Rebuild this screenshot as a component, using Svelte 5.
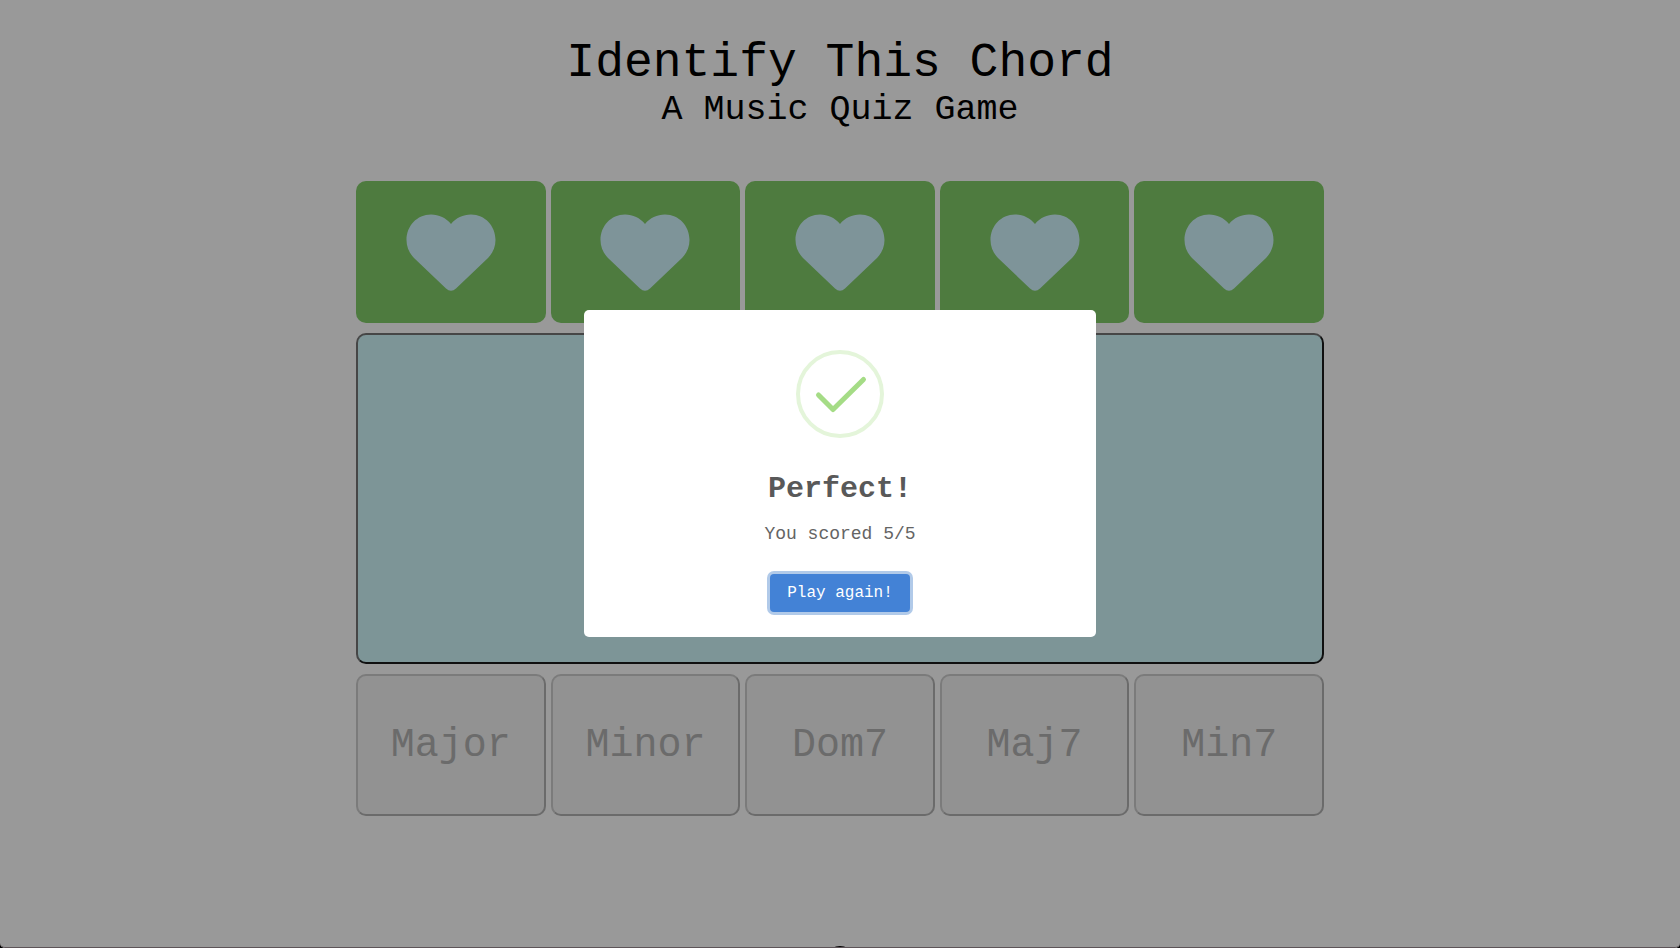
<script>
  const rounds = [1, 2, 3, 4, 5];
  const chords = ['Major', 'Minor', 'Dom7', 'Maj7', 'Min7'];
</script>

<div class="page">
  <header>
    <h1>Identify This Chord</h1>
    <h2>A Music Quiz Game</h2>
  </header>

  <main>
    <div class="row">
      {#each rounds as round (round)}
        <div class="life">
          <svg viewBox="0 0 90 78" aria-hidden="true">
            <path d="M45 10C50 4 57 .5 65 .5C79 .5 89.500 12 89.500 26C89.500 33 86.500 39.500 82 44L50 74.500Q45 79 40 74.500L8 44C3.500 39.500 .5 33 .5 26C.5 12 11 .5 25 .5C33 .5 40 4 45 10Z" />
          </svg>
        </div>
      {/each}
    </div>

    <button class="stage" type="button" aria-label="Play chord"></button>

    <div class="row">
      {#each chords as chord (chord)}
        <button class="answer" type="button" disabled>{chord}</button>
      {/each}
    </div>
  </main>

  <footer><span class="disc"></span></footer>
</div>

<div class="overlay">
  <div class="modal" role="dialog" aria-modal="true" aria-labelledby="result">
    <svg class="check" viewBox="0 0 88 88" aria-hidden="true">
      <circle cx="44" cy="44" r="42" />
      <path d="M22.500 45L37 59.500L67.500 29.500" />
    </svg>
    <h3 id="result">Perfect!</h3>
    <p>You scored 5/5</p>
    <button class="again" type="button">Play again!</button>
  </div>
</div>

<style>
  :global(body) {
    margin: 0;
    background: #000;
    overflow: hidden;
    font-family: "Courier New", "Liberation Mono", monospace;
  }

  .page {
    height: 100vh;
    overflow: hidden;
    display: flex;
    flex-direction: column;
    align-items: center;
    box-sizing: border-box;
    padding-top: 35px;
    border-radius: 0 0 5px 5px;
    background: #fff;
    color: #000;
  }

  header {
    text-align: center;
    margin-bottom: 52px;
  }

  h1,
  h2 {
    margin: 0;
    font-weight: 400;
  }

  h1 {
    font-size: 48px;
    line-height: 56px;
  }

  h2 {
    font-size: 35px;
    line-height: 38px;
  }

  main {
    width: 100%;
    max-width: 968px;
    display: grid;
    gap: 10px;
  }

  .row {
    display: grid;
    grid-template-columns: repeat(5, 1fr);
    gap: 5px;
  }

  button {
    font-family: inherit;
    box-sizing: border-box;
  }

  .life,
  .answer {
    height: 142px;
    border-radius: 10px;
  }

  .life {
    box-sizing: border-box;
    padding-top: 2px;
    display: flex;
    align-items: center;
    justify-content: center;
    background: #82cd6a;
  }

  .life svg {
    width: 90px;
    height: 78px;
    fill: #d2f7ff;
  }

  .stage {
    height: 331px;
    border: 2px solid;
    border-color: #757575 #1c1c1c #1c1c1c #757575;
    border-radius: 10px;
    background: #d1f8fc;
  }

  .answer {
    padding: 0;
    border: 2px solid;
    border-color: #cdcdcd #b2b2b2 #b2b2b2 #cdcdcd;
    background: #f4f4f4;
    color: #b2b2b2;
    font-size: 40px;
  }

  footer {
    flex: none;
    margin-top: 130px;
  }

  .disc {
    display: block;
    width: 30px;
    height: 30px;
    border-radius: 50%;
    background: #000;
  }

  .overlay {
    position: fixed;
    inset: 0;
    box-sizing: border-box;
    display: flex;
    align-items: center;
    justify-content: center;
    background: rgba(0, 0, 0, 0.4);
    border-bottom: 1px solid #5d5458;
    border-radius: 0 0 5px 5px;
  }

  .modal {
    width: 512px;
    max-width: 90%;
    box-sizing: border-box;
    padding: 40px 20px 25px;
    border-radius: 5px;
    background: #fff;
    display: flex;
    flex-direction: column;
    align-items: center;
    text-align: center;
  }

  .check {
    width: 88px;
    height: 88px;
    fill: none;
    stroke-width: 4;
    stroke: #e4f5da;
  }

  .check path {
    stroke: #a5dc86;
    stroke-width: 5;
    stroke-linecap: round;
    stroke-linejoin: round;
  }

  h3 {
    margin: 33px 0 14px;
    font-size: 30px;
    line-height: 36px;
    color: #595959;
  }

  p {
    margin: 0 0 27px;
    font-size: 18px;
    line-height: 26px;
    color: #646464;
  }

  .again {
    width: 140px;
    height: 38px;
    padding: 0;
    border: 0;
    border-radius: 4px;
    background: #4382d6;
    color: #fff;
    font-size: 16px;
    box-shadow: 0 0 0 3px #b1cae9;
  }
</style>
